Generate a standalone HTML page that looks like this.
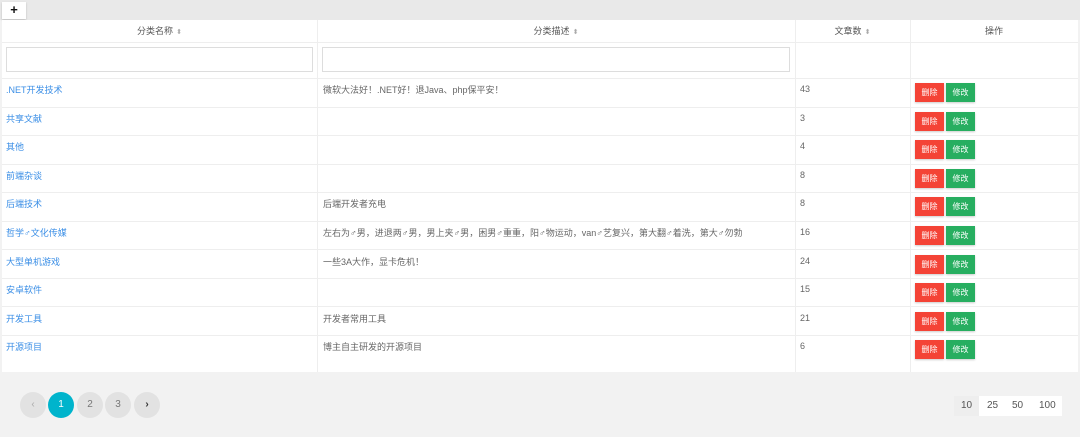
<!DOCTYPE html>
<html><head><meta charset="utf-8"><style>
*{box-sizing:border-box;margin:0;padding:0}
body{width:1080px;height:437px;background:#f2f2f2;font-family:"Liberation Sans","Noto Sans CJK SC",sans-serif;font-size:9px;color:#666;position:relative;overflow:hidden}
.top{position:absolute;left:0;top:0;width:1080px;height:20px;background:#e9e9e9}
.plus{position:absolute;left:2px;top:2px;width:24px;height:17px;background:#fff;box-shadow:0 1px 2px rgba(0,0,0,.2);font-weight:bold;font-size:13px;line-height:16px;text-align:center;color:#111}
.tbl{position:absolute;left:2px;top:20px;width:1076px;height:352px;background:#fff}
.v{position:absolute;top:0;height:352px;width:1px;background:#eee}
.h{position:absolute;left:0;width:1076px;height:1px;background:#eee}
.th{position:absolute;top:0;height:22px;line-height:22px;text-align:center;color:#555}
.th i{font-style:normal;color:#aaa;font-size:7px;margin-left:3px}
.inp{position:absolute;top:27px;height:25px;border:1px solid #ddd;background:#fff}
.c{position:absolute;white-space:nowrap}
.a{color:#3a8ee6}
.b{position:absolute;width:29px;height:19px;color:#fff;font-size:8px;line-height:19px;text-align:center;box-shadow:0 1px 2px rgba(0,0,0,.2)}
.del{background:#f44336}.ed{background:#27ae60}
.pg{position:absolute;top:392px;width:26px;height:26px;border-radius:50%;background:#e2e2e2;text-align:center;line-height:26px;color:#777;font-size:10px}
.ps{position:absolute;left:954px;top:396px;width:108px;height:20px;background:#fff;font-size:10px;color:#555}
.ps span{position:absolute;top:0;line-height:20px}
</style></head><body>
<div class="top"></div><div class="plus">+</div>
<div class="tbl">
<div class="v" style="left:315px"></div><div class="v" style="left:793px"></div><div class="v" style="left:908px"></div>
<div class="h" style="top:22px"></div><div class="h" style="top:58px"></div>
<div class="h" style="top:87px"></div><div class="h" style="top:115px"></div><div class="h" style="top:144px"></div><div class="h" style="top:172px"></div><div class="h" style="top:201px"></div><div class="h" style="top:229px"></div><div class="h" style="top:258px"></div><div class="h" style="top:286px"></div><div class="h" style="top:315px"></div>
<div class="th" style="left:0;width:315px">分类名称<i>⬍</i></div>
<div class="th" style="left:315px;width:478px">分类描述<i>⬍</i></div>
<div class="th" style="left:793px;width:115px">文章数<i>⬍</i></div>
<div class="th" style="left:908px;width:168px">操作</div>
<div class="inp" style="left:4px;width:307px"></div>
<div class="inp" style="left:320px;width:468px"></div>
</div>
<div id="rows"></div>
<div class="pg" style="left:20px;color:#aaa">‹</div>
<div class="pg" style="left:48px;background:#00b4cc;color:#fff">1</div>
<div class="pg" style="left:77px">2</div>
<div class="pg" style="left:105px">3</div>
<div class="pg" style="left:134px;color:#333;font-weight:bold">›</div>
<div class="ps"><span style="left:0;width:25px;background:#eee;text-align:center">10</span><span style="left:33px">25</span><span style="left:58px">50</span><span style="left:85px">100</span></div>
<script>
var d=[[".NET开发技术","微软大法好！.NET好！退Java、php保平安！","43"],["共享文献","","3"],["其他","","4"],["前端杂谈","","8"],["后端技术","后端开发者充电","8"],["哲学♂文化传媒","左右为♂男，进退两♂男，男上夹♂男，困男♂重重，阳♂物运动，van♂艺复兴，第大翻♂着洗，第大♂勿勃","16"],["大型单机游戏","一些3A大作，显卡危机！","24"],["安卓软件","","15"],["开发工具","开发者常用工具","21"],["开源项目","博主自主研发的开源项目","6"]];
var h="";d.forEach(function(r,i){var y=78+i*28.6;
h+='<div class="c a" style="left:6px;top:'+(y+5)+'px">'+r[0]+'</div><div class="c" style="left:323px;top:'+(y+5)+'px">'+r[1]+'</div><div class="c" style="left:800px;top:'+(y+6)+'px">'+r[2]+'</div><div class="b del" style="left:915px;top:'+(y+5)+'px">删除</div><div class="b ed" style="left:946px;top:'+(y+5)+'px">修改</div>';});
document.getElementById("rows").innerHTML=h;
</script>
</body></html>
